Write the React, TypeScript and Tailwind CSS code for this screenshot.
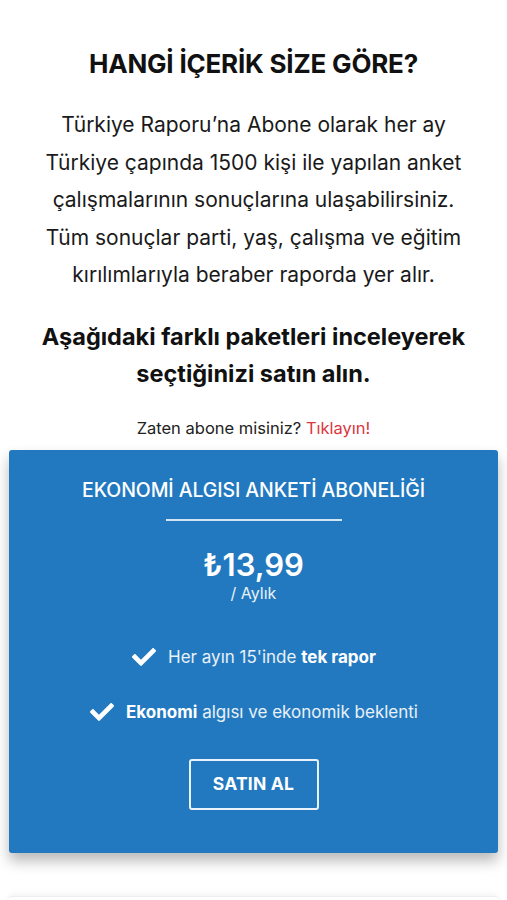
import React from 'react';
import { FaCheck } from 'react-icons/fa';

const FEATURES = [
  { pre: "Her ayın 15'inde ", bold: 'tek rapor', post: '' },
  { pre: '', bold: 'Ekonomi', post: ' algısı ve ekonomik beklenti' },
];

export default function App() {
  return (
    <div className="min-h-[900px] bg-white font-['Inter',sans-serif] text-[#111] overflow-hidden">
      {/* Intro */}
      <section className="px-4 pt-[46px] text-center">
        <h1 className="text-[26px] font-bold tracking-[-0.2px] leading-[36px]">HANGİ İÇERİK SİZE GÖRE?</h1>
        <p className="mt-[24px] text-[21px] leading-[37.5px] text-[#1a1a1a]">
          Türkiye Raporu’na Abone olarak her ay
          <br />
          Türkiye çapında 1500 kişi ile yapılan anket
          <br />
          çalışmalarının sonuçlarına ulaşabilirsiniz.
          <br />
          Tüm sonuçlar parti, yaş, çalışma ve eğitim
          <br />
          kırılımlarıyla beraber raporda yer alır.
        </p>
        <h2 className="mt-[24px] text-[23.5px] font-bold leading-[37.5px]">
          Aşağıdaki farklı paketleri inceleyerek
          <br />
          seçtiğinizi satın alın.
        </h2>
        <p className="mt-[24px] text-[16.5px] leading-[22px] text-[#222]">
          Zaten abone misiniz? <span className="text-[#d9363e]">Tıklayın!</span>
        </p>
      </section>

      {/* Package card */}
      <div className="px-[9px] mt-[11px]">
        <div className="bg-[#2279bf] rounded-[3px] shadow-[0_8px_14px_rgba(0,0,0,0.28)] text-white text-center pt-[28px] pb-[43px]">
          <h3 className="text-[19.5px] font-medium leading-[24px] tracking-[-0.1px]">EKONOMİ ALGISI ANKETİ ABONELİĞİ</h3>
          <div className="mx-auto mt-[17px] w-[176px] h-[2px] bg-white/80" />
          <div className="mt-[26px] text-[31px] font-semibold leading-[36px]">₺13,99</div>
          <div className="text-[16px] leading-[20px] text-white/90">/ Aylık</div>

          <ul className="mt-[41px] flex flex-col items-center gap-[29px] text-[17px] text-white/90">
            {FEATURES.map((f, i) => (
              <li key={i} className="flex items-center gap-[11px] leading-[26px] h-[26px]">
                <FaCheck className="w-[26px] h-[24px] text-white" />
                <span>
                  {f.pre}
                  <strong className="font-bold text-white">{f.bold}</strong>
                  {f.post}
                </span>
              </li>
            ))}
          </ul>

          <button className="mt-[34px] w-[130px] h-[51px] border-2 border-white/90 rounded-[3px] text-[17.5px] font-bold tracking-[0.2px]">
            SATIN AL
          </button>
        </div>
      </div>

      {/* next card peeking */}
      <div className="px-[9px] mt-[43px]">
        <div className="h-[20px] rounded-t-[3px] bg-white border-t border-[#eee] shadow-[0_-2px_6px_rgba(0,0,0,0.05)]" />
      </div>
    </div>
  );
}
